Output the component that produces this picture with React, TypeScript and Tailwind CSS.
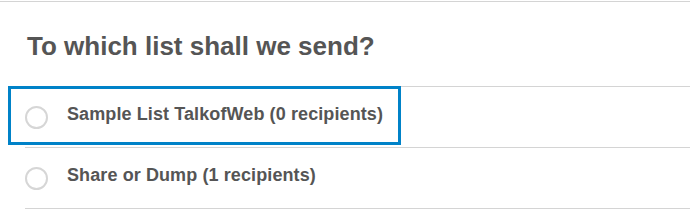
const lists = [
  { name: 'Sample List TalkofWeb', count: 0, focused: true },
  { name: 'Share or Dump', count: 1, focused: false },
];

export default function App() {
  return (
    <div className="w-[690px] h-[216px] bg-white pt-px font-['Liberation_Sans',Arial,sans-serif] text-[#555555] overflow-hidden">
      <div className="border-t border-[#d4d4d4]">
        <h2 className="mt-[28px] ml-[27px] text-[26px] leading-[32px] font-bold">To which list shall we send?</h2>

        <ul className="mt-[24px] ml-[25px] border-b border-[#d4d4d4]">
          {lists.map((list) => (
            <li key={list.name} className="relative flex items-center h-[61px] border-t border-[#d4d4d4]">
              {list.focused && (
                <div className="absolute left-[-17px] top-[-1px] w-[393px] h-[59px] border-[3px] border-[#0082c8]" />
              )}
              <span className="w-[23px] h-[23px] rounded-full border-2 border-[#d6d6d6] shrink-0" />
              <span className="ml-[19px] mb-[6px] text-[18px] leading-[22px] font-bold tracking-[0.1px]">
                {list.name} ({list.count} recipients)
              </span>
            </li>
          ))}
        </ul>
      </div>
    </div>
  );
}
